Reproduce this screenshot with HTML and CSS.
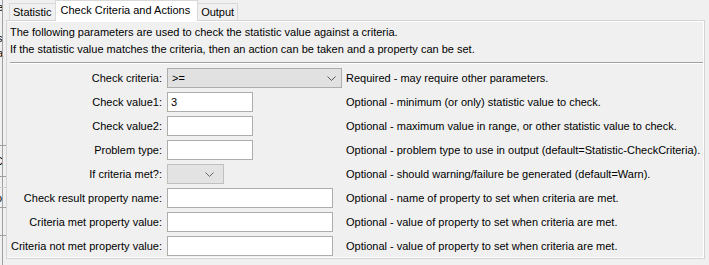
FILE: index.html
```
<!DOCTYPE html>
<html>
<head>
<meta charset="utf-8">
<link rel="stylesheet" href="styles.css">
</head>
<body>
<div class="behind">
  <span class="bit bit-e">e</span>
  <span class="bit bit-s">s</span>
  <span class="bit bit-a">a</span>
  <span class="bit bit-c">C</span>
  <span class="bit bit-o">o</span>
  <div class="vline"></div>
  <div class="hline h1"></div>
  <div class="hline h2"></div>
  <div class="hline h3"></div>
  <div class="hline h4"></div>
  <div class="hline h5"></div>
</div>
<div class="window">
  <div class="tabs">
    <div class="tab">Statistic</div>
    <div class="tab selected">Check Criteria and Actions</div>
    <div class="tab">Output</div>
  </div>
  <div class="panel">
    <div class="intro">
      <div>The following parameters are used to check the statistic value against a criteria.</div>
      <div>If the statistic value matches the criteria, then an action can be taken and a property can be set.</div>
    </div>
    <div class="sep"></div>
    <div class="form">
      <div class="label">Check criteria:</div>
      <div class="cell"><div class="combo wide"><span>&gt;=</span><svg class="chev" width="9" height="6" viewBox="0 0 9 6"><path d="M0.5 0.5 L4.5 4.5 L8.5 0.5" fill="none" stroke="#555" stroke-width="1"/></svg></div></div>
      <div class="desc">Required - may require other parameters.</div>

      <div class="label">Check value1:</div>
      <div class="cell"><div class="field short">3</div></div>
      <div class="desc">Optional - minimum (or only) statistic value to check.</div>

      <div class="label">Check value2:</div>
      <div class="cell"><div class="field short"></div></div>
      <div class="desc">Optional - maximum value in range, or other statistic value to check.</div>

      <div class="label">Problem type:</div>
      <div class="cell"><div class="field short"></div></div>
      <div class="desc">Optional - problem type to use in output (default=Statistic-CheckCriteria).</div>

      <div class="label">If criteria met?:</div>
      <div class="cell"><div class="combo small disabled"><span></span><svg class="chev" width="9" height="6" viewBox="0 0 9 6"><path d="M0.5 0.5 L4.5 4.5 L8.5 0.5" fill="none" stroke="#666" stroke-width="1"/></svg></div></div>
      <div class="desc">Optional - should warning/failure be generated (default=Warn).</div>

      <div class="label">Check result property name:</div>
      <div class="cell"><div class="field long"></div></div>
      <div class="desc">Optional - name of property to set when criteria are met.</div>

      <div class="label">Criteria met property value:</div>
      <div class="cell"><div class="field long"></div></div>
      <div class="desc">Optional - value of property to set when criteria are met.</div>

      <div class="label">Criteria not met property value:</div>
      <div class="cell"><div class="field long"></div></div>
      <div class="desc">Optional - value of property to set when criteria are met.</div>
    </div>
  </div>
</div>
</body>
</html>
```
FILE: styles.css
```
html, body {
  margin: 0;
  padding: 0;
}
body {
  width: 709px;
  height: 265px;
  background: #f0f0f0;
  font-family: "Liberation Sans", Arial, sans-serif;
  font-size: 11px;
  color: #000;
  position: relative;
  overflow: hidden;
}
.behind {
  position: absolute;
  left: 0;
  top: 0;
  width: 6px;
  height: 265px;
  overflow: hidden;
}
.bit {
  position: absolute;
  left: -3px;
  font-size: 11px;
  line-height: 12px;
}
.bit-e { top: 1px; }
.bit-s { top: 32px; }
.bit-a { top: 47px; }
.bit-c { top: 155px; left: -5px; }
.bit-o { top: 192px; left: -4px; }
.vline {
  position: absolute;
  left: 2px;
  top: 0;
  width: 1px;
  height: 265px;
  background: #a0a0a0;
}
.hline {
  position: absolute;
  left: 0;
  width: 6px;
  height: 1px;
  background: #a0a0a0;
}
.h1 { top: 145px; }
.h2 { top: 176px; }
.h3 { top: 187px; background: #d0d0d0; }
.h4 { top: 207px; }
.h5 { top: 235px; }

.window {
  position: relative;
  margin-left: 6px;
  width: 699px;
}
.tabs {
  display: flex;
  align-items: flex-end;
  height: 20px;
  padding-left: 3px;
  position: relative;
  z-index: 2;
}
.tab {
  height: 16px;
  line-height: 16px;
  padding: 0 3px 0 3px;
  border: 1px solid #d9d9d9;
  border-bottom: none;
  background: #f0f0f0;
  box-sizing: content-box;
}
.tab:first-child {
  border-right: none;
}
.tab.selected {
  height: 20px;
  line-height: 18px;
  padding: 0 7px 0 5px;
  background: #ffffff;
  margin-bottom: -1px;
  border-color: #d9d9d9;
}
.tab.selected + .tab {
  border-left: none;
}
.panel {
  width: 697px;
  height: 237px;
  border: 1px solid #d4d4d4;
  box-shadow: inset 0 1px 0 #ffffff, inset -1px -1px 0 #ffffff;
  position: relative;
  z-index: 1;
}
.intro {
  padding: 3px 0 0 3px;
  line-height: 17px;
}
.sep {
  margin: 4px 1px 0 3px;
  height: 1px;
  background: #a0a0a0;
  border-bottom: 1px solid #ffffff;
}
.form {
  display: grid;
  grid-template-columns: 155px 175px 1fr;
  column-gap: 5px;
  row-gap: 4px;
  margin-top: 4px;
  grid-auto-rows: 20px;
}
.label {
  text-align: right;
  line-height: 20px;
  white-space: nowrap;
}
.desc {
  line-height: 20px;
  white-space: nowrap;
  margin-left: -1px;
}
.cell {
  display: flex;
  align-items: stretch;
}
.field {
  box-sizing: border-box;
  height: 20px;
  background: #ffffff;
  border: 1px solid #adadad;
  line-height: 18px;
  padding-left: 3px;
}
.field.short { width: 86px; }
.field.long { width: 166px; }
.combo {
  box-sizing: border-box;
  height: 20px;
  background: #e1e1e1;
  border: 1px solid #adadad;
  display: flex;
  align-items: center;
  justify-content: space-between;
  padding: 0 5px 0 4px;
}
.combo.wide { width: 176px; }
.combo.small { width: 57px; background: #e3e3e3; border-color: #c0c0c0; }
.chev { display: block; margin-top: 1px; }
.combo.small .chev { margin-right: 4px; }
```
